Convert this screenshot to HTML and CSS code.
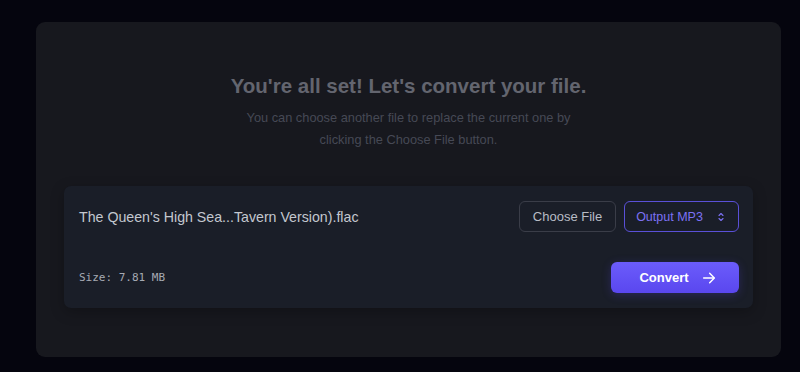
FILE: index.html
```html
<!DOCTYPE html>
<html lang="en">
<head>
    <meta charset="UTF-8">
    <meta name="viewport" content="width=device-width, initial-scale=1.0">
    <title>Convert | Audio Converter</title>
    <link rel="stylesheet" href="styles.css">
</head>
<body>

    <div class="card">
        <h2 class="title">You're all set! Let's convert your file.</h2>
        <p class="subtitle">You can choose another file to replace the current one by<br>clicking the Choose File button.</p>

        <div class="file-panel">
            <div class="file-row">
                <span class="file-name">The Queen's High Sea...Tavern Version).flac</span>
                <div class="file-actions">
                    <button class="choose-btn">Choose File</button>
                    <button class="format-btn">
                        Output MP3
                        <svg width="12" height="12" viewBox="0 0 24 24" fill="none" stroke="currentColor" stroke-width="2.2" stroke-linecap="round" stroke-linejoin="round"><path d="M8 9l4-4 4 4"/><path d="M8 15l4 4 4-4"/></svg>
                    </button>
                </div>
            </div>
            <div class="file-row">
                <span class="file-size">Size: 7.81 MB</span>
                <button class="convert-btn">
                    Convert
                    <svg width="16" height="16" viewBox="0 0 24 24" fill="none" stroke="currentColor" stroke-width="2.2" stroke-linecap="round" stroke-linejoin="round"><path d="M4 12h15"/><path d="M13 5l7 7-7 7"/></svg>
                </button>
            </div>
        </div>
    </div>

</body>
</html>
```

FILE: styles.css
```css
/* General Styles */
body {
    margin: 0;
    padding: 0;
    font-family: 'Liberation Sans', Arial, sans-serif;
    background: #05050e;
    color: white;
}

/* Main Card */
.card {
    margin: 22px 19px 0 36px;
    height: 335px;
    box-sizing: border-box;
    padding: 50px 28px 0;
    background: #17181e;
    border-radius: 9px;
    text-align: center;
}

.title {
    margin: 0;
    font-size: 20.5px;
    line-height: 28px;
    font-weight: bold;
    color: #63656f;
}

.subtitle {
    margin: 7px 0 35px;
    font-size: 12.8px;
    line-height: 22px;
    color: #464955;
}

/* File Panel */
.file-panel {
    background: #1a1e28;
    border-radius: 7px;
    padding: 15px 14px 15px 15px;
    display: flex;
    flex-direction: column;
    gap: 30px;
    box-shadow: 0 4px 14px rgba(0, 0, 0, 0.25);
}

.file-row {
    display: flex;
    justify-content: space-between;
    align-items: center;
    height: 31px;
}

.file-name {
    font-size: 14.2px;
    color: #c3c7cf;
}

.file-size {
    font-family: 'DejaVu Sans Mono', 'Liberation Mono', monospace;
    font-size: 11px;
    color: #a6aab3;
}

.file-actions {
    display: flex;
    gap: 8px;
}

/* Buttons */
.choose-btn, .format-btn, .convert-btn {
    font-family: inherit;
    font-size: 13px;
    height: 31px;
    padding: 0;
    border-radius: 6px;
    cursor: pointer;
    display: flex;
    align-items: center;
    justify-content: center;
    box-sizing: border-box;
    white-space: nowrap;
}

.choose-btn {
    width: 97px;
    background: transparent;
    border: 1px solid #3a3d48;
    color: #b8bcc5;
}

.format-btn {
    width: 115px;
    gap: 12px;
    font-size: 12.5px;
    background: transparent;
    border: 1px solid #5a50d8;
    color: #7c71f4;
}

.convert-btn {
    width: 128px;
    gap: 12px;
    padding-left: 6px;
    border: none;
    font-weight: bold;
    color: white;
    background: linear-gradient(to bottom, #6b5cfb, #5a47ef);
    box-shadow: 0 2px 10px rgba(90, 70, 240, 0.25);
}
```
